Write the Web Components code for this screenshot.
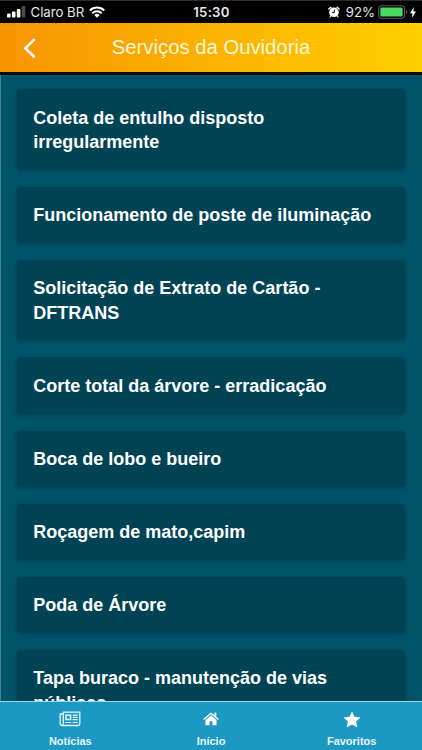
<!DOCTYPE html>
<html lang="pt-BR">
<head>
<meta charset="utf-8">
<meta name="viewport" content="width=device-width, initial-scale=1">
<title>Serviços da Ouvidoria</title>
<style>
  html, body { margin: 0; height: 100%; overflow: hidden; background: #00546a; }
  body { font-family: "Liberation Sans", Arial, sans-serif; color: #fff; }
</style>
</head>
<body>
<app-tela>
  <barra-status slot="status" operadora="Claro BR" hora="15:30" bateria="92%"></barra-status>
  <barra-titulo slot="titulo">Serviços da Ouvidoria</barra-titulo>
  <cartao-servico>Coleta de entulho disposto irregularmente</cartao-servico>
  <cartao-servico>Funcionamento de poste de iluminação</cartao-servico>
  <cartao-servico>Solicitação de Extrato de Cartão - DFTRANS</cartao-servico>
  <cartao-servico>Corte total da árvore - erradicação</cartao-servico>
  <cartao-servico>Boca de lobo e bueiro</cartao-servico>
  <cartao-servico>Roçagem de mato,capim</cartao-servico>
  <cartao-servico>Poda de Árvore</cartao-servico>
  <cartao-servico>Tapa buraco - manutenção de vias públicas</cartao-servico>
  <barra-abas slot="abas">
    <aba-item icone="jornal">Notícias</aba-item>
    <aba-item icone="casa">Início</aba-item>
    <aba-item icone="estrela">Favoritos</aba-item>
  </barra-abas>
</app-tela>

<script>
// Base comum: cada componente só declara o próprio template.
class Componente extends HTMLElement {
  constructor() {
    super();
    this.attachShadow({ mode: "open" });
  }
  connectedCallback() {
    this.shadowRoot.innerHTML = this.template();
  }
}

// Estrutura da tela: status, título, lista e abas.
class AppTela extends Componente {
  template() {
    return `
      <style>
        :host {
          display: flex;
          flex-direction: column;
          box-sizing: border-box;
          height: 750px;
          overflow: hidden;
          background: #00546a;
        }
        main {
          flex: 1;
          min-height: 0;
          overflow: hidden;
          box-sizing: border-box;
          border-left: 1px solid #427f92;
          padding: 14.4px 17.3px 0 16.3px;
          display: flex;
          flex-direction: column;
          gap: 17px;
        }
      </style>
      <slot name="status"></slot>
      <slot name="titulo"></slot>
      <main><slot></slot></main>
      <slot name="abas"></slot>
    `;
  }
}
customElements.define("app-tela", AppTela);

class BarraStatus extends Componente {
  template() {
    return `
      <style>
        :host {
          display: grid;
          grid-template-columns: 1fr auto 1fr;
          align-items: center;
          box-sizing: border-box;
          flex: none;
          height: 23px;
          padding: 0 6px 0 7px;
          border-top: 1px solid #2b2b2b;
          background: #000;
          color: #e9e9e9;
          font: 13.2px/20px Inter, "Liberation Sans", sans-serif;
        }
        div { display: flex; align-items: center; }
        svg { display: block; flex: none; }
        .rede { gap: 4.5px; }
        .hora { font-weight: 600; letter-spacing: 0.25px; }
        .energia { justify-content: flex-end; }
        .alarme { margin-right: 6px; }
        .pilha { margin: 0 2px 0 3px; }
      </style>
      <div class="rede">
        <svg width="19" height="12" viewBox="0 0 19 12" fill="#fff">
          <rect x="0" y="7.4" width="3.6" height="4" rx="1"/>
          <rect x="4.9" y="5.4" width="3.6" height="6" rx="1"/>
          <rect x="9.8" y="2.9" width="3.6" height="8.5" rx="1"/>
          <rect x="14.7" y="0" width="3.6" height="11.4" rx="1" fill="#4b4b4b"/>
        </svg>
        <span>${this.getAttribute("operadora")}</span>
        <svg width="16" height="12" viewBox="0 0 16 12" fill="none" stroke="#fff" stroke-width="2">
          <path d="M0.8 4.5a10.2 10.2 0 0 1 14.4 0"/>
          <path d="M3.3 7.2a6.6 6.6 0 0 1 9.4 0"/>
          <path d="M8 11.7 5.3 9a3.8 3.8 0 0 1 5.4 0z" fill="#fff" stroke="none"/>
        </svg>
      </div>
      <div class="hora">${this.getAttribute("hora")}</div>
      <div class="energia">
        <svg class="alarme" width="12" height="12" viewBox="0 0 12 12">
          <circle cx="6" cy="6.3" r="4.8" fill="#fff"/>
          <path d="M.9 3 2.900 1.200M11.100 3 9.100 1.200" stroke="#fff" stroke-width="1.5" stroke-linecap="round"/>
          <path d="m2.8 10-.8 1M9.2 10l.8 1" stroke="#fff" stroke-width="1.2" stroke-linecap="round"/>
          <path d="M6.3 3.6v3H4" fill="none" stroke="#000" stroke-width="1"/>
        </svg>
        <span>${this.getAttribute("bateria")}</span>
        <svg class="pilha" width="30" height="14" viewBox="0 0 30 14">
          <rect x=".6" y=".8" width="26" height="12.4" rx="3.2" fill="none" stroke="#5d5d5d" stroke-width="1.1"/>
          <rect x="2.3" y="2.5" width="22.3" height="9" rx="1.4" fill="#4cd964"/>
          <path d="M28 5v4c1-.3 1.4-1.1 1.4-2S29 5.3 28 5z" fill="#5d5d5d"/>
        </svg>
        <svg width="6" height="11" viewBox="0 0 6 11"><path d="M4 0 0 6.200h2.500L1.800 11 6 4.600H3.300z" fill="#fff"/></svg>
      </div>
    `;
  }
}
customElements.define("barra-status", BarraStatus);

class BarraTitulo extends Componente {
  template() {
    return `
      <style>
        :host {
          display: grid;
          grid-template-columns: 60px 1fr 60px;
          align-items: center;
          box-sizing: border-box;
          flex: none;
          height: 52px;
          border-bottom: 3px solid #070d12;
          background: linear-gradient(90deg, #f79502, #ffcf00);
          color: #fff8da;
        }
        svg { display: block; margin-left: 23px; }
        h1 { margin: 0 0 2px; font-size: 20.3px; font-weight: 400; line-height: 28px; text-align: center; white-space: nowrap; }
      </style>
      <svg width="14" height="20" viewBox="0 0 14 20" fill="none" stroke="#fff" stroke-width="2.6">
        <path d="M11.6 1.2 2.4 10.3l9.200 9"/>
      </svg>
      <h1><slot></slot></h1>
    `;
  }
}
customElements.define("barra-titulo", BarraTitulo);

class CartaoServico extends Componente {
  template() {
    return `
      <style>
        :host {
          display: block;
          flex: none;
          box-sizing: border-box;
          padding: 16.5px 12px 15.2px 16px;
          border-radius: 4px;
          background: #004355;
          box-shadow: 0 1px 4px rgba(0, 50, 65, 0.5);
        }
        h2 { margin: 0; font-size: 18px; font-weight: 700; line-height: 24.4px; }
      </style>
      <h2><slot></slot></h2>
    `;
  }
}
customElements.define("cartao-servico", CartaoServico);

class BarraAbas extends Componente {
  template() {
    return `
      <style>
        :host {
          display: grid;
          grid-template-columns: repeat(3, 1fr);
          box-sizing: border-box;
          flex: none;
          height: 49px;
          border-top: 1px solid #a5d5e5;
          background: #1c99c3;
        }
      </style>
      <slot></slot>
    `;
  }
}
customElements.define("barra-abas", BarraAbas);

const icones = {
  jornal: `
    <svg width="22" height="16" viewBox="0 0 22 16" fill="none" stroke="#e4f7fd" stroke-width="1.3">
      <path d="M3.6 3H1.2v9.8a1.7 1.7 0 0 0 1.7 1.7h16.4a1.5 1.5 0 0 0 1.5-1.5V1.2H4.3v11.6a1.6 1.6 0 0 1-1.5 1.7"/>
      <rect x="7" y="4.2" width="4.6" height="4.3" stroke-width="1.5"/>
      <path d="M13.7 4.2h5M13.7 6.4h5M13.7 8.6h5M6.3 11.5h5.900M13.7 11.5h5" stroke-width="1.2"/>
    </svg>`,
  casa: `
    <svg width="16" height="16" viewBox="0 0 16 16" fill="#fff">
      <path d="M8 1.6.2 8.1l.8 1L8 3.3l7 5.8.8-1-2.5-2.1V1.7h-2v2.6z"/>
      <path d="M8 4.5 2.5 9v5.3h4.1v-4h2.800v4h4.100V9z"/>
    </svg>`,
  estrela: `
    <svg width="18" height="17" viewBox="0 0 18 17" fill="#fff">
      <path d="m9 .4 2.500 5.400 6 .7-4.400 4 1.200 5.900L9 13.400l-5.300 3 1.200-5.900-4.400-4 6-.7z"/>
    </svg>`,
};

class AbaItem extends Componente {
  template() {
    return `
      <style>
        :host {
          display: flex;
          flex-direction: column;
          align-items: center;
          font-size: 11px;
          font-weight: 700;
          line-height: 14px;
          color: #e9f8fd;
        }
        .icone { display: flex; align-items: center; justify-content: center; height: 18px; margin: 8px 0 6px; }
      </style>
      <span class="icone">${icones[this.getAttribute("icone")]}</span>
      <span><slot></slot></span>
    `;
  }
}
customElements.define("aba-item", AbaItem);
</script>
</body>
</html>
